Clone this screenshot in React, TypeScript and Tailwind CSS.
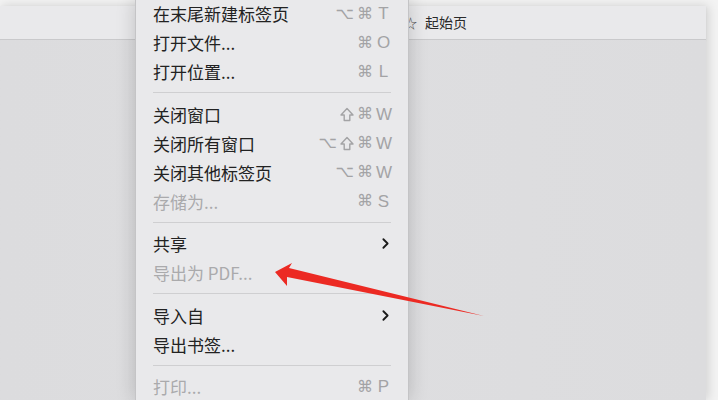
import { ChevronRight } from "lucide-react";

type Item =
  | { kind: "item"; label: string; keys?: string; disabled?: boolean; submenu?: boolean }
  | { kind: "sep" };

const items: Item[] = [
  { kind: "item", label: "在末尾新建标签页", keys: "⌥⌘T" },
  { kind: "item", label: "打开文件...", keys: "⌘O" },
  { kind: "item", label: "打开位置...", keys: "⌘L" },
  { kind: "sep" },
  { kind: "item", label: "关闭窗口", keys: "⇧⌘W" },
  { kind: "item", label: "关闭所有窗口", keys: "⌥⇧⌘W" },
  { kind: "item", label: "关闭其他标签页", keys: "⌥⌘W" },
  { kind: "item", label: "存储为...", keys: "⌘S", disabled: true },
  { kind: "sep" },
  { kind: "item", label: "共享", submenu: true },
  { kind: "item", label: "导出为 PDF...", disabled: true },
  { kind: "sep" },
  { kind: "item", label: "导入自", submenu: true },
  { kind: "item", label: "导出书签..." },
  { kind: "sep" },
  { kind: "item", label: "打印...", keys: "⌘P", disabled: true },
];

// outline shift arrow, the font version comes out too small
function ShiftKey() {
  return (
    <svg width="14" height="15" viewBox="0 0 14 15" fill="none" stroke="currentColor" strokeWidth="1.4" strokeLinejoin="round">
      <path d="M7 1.5 L13 8 H9.8 V13.5 H4.2 V8 H1 Z" />
    </svg>
  );
}

function Shortcut({ keys }: { keys: string }) {
  const chars = Array.from(keys);
  return (
    <span className="flex items-center gap-[3px] text-[#a3a3a5]">
      {chars.map((c, i) =>
        c === "⇧" ? (
          <ShiftKey key={i} />
        ) : (
          <span
            key={i}
            className={
              /[A-Z]/.test(c)
                ? "w-[15px] text-center font-['Liberation_Sans',sans-serif] text-[17px]"
                : "font-['DejaVu_Sans',sans-serif] text-[16px]"
            }
          >
            {c}
          </span>
        )
      )}
    </span>
  );
}

function FileMenu() {
  return (
    <div className="absolute left-[135px] top-[-1px] w-[274px] h-[402px] bg-[#e9e9eb] border-x border-[#c4c4c6] shadow-[0_0_18px_rgba(0,0,0,0.18)]">
      {items.map((it, i) =>
        it.kind === "sep" ? (
          <div key={i} className="h-[13.5px] flex items-center px-[17px]">
            <div className="h-px w-full bg-[#cfcfd1]" />
          </div>
        ) : (
          <div
            key={i}
            className={
              "h-[29px] flex items-center justify-between px-[17px] text-[17px] leading-none " +
              (it.disabled ? "text-[#aaaaac]" : "text-[#222222]")
            }
          >
            <span>{it.label}</span>
            {it.keys && <Shortcut keys={it.keys} />}
            {it.submenu && <ChevronRight className="w-[17px] h-[17px] text-[#1a1a1a] mr-[-3px]" strokeWidth={2.6} />}
          </div>
        )
      )}
    </div>
  );
}

function Arrow() {
  return (
    <svg className="absolute left-0 top-0 pointer-events-none" width="718" height="400" viewBox="0 0 718 400">
      <polygon points="275,272 292,263 289,268 484,316 287,277 287,286" fill="#ec2a23" />
    </svg>
  );
}

export default function App() {
  return (
    <div
      className="relative w-[718px] h-[400px] overflow-hidden bg-[#f3f3f3]"
      style={{ fontFamily: '"Noto Sans CJK SC", "Noto Sans", sans-serif' }}
    >
      <div className="pt-[6px] pr-[12px] h-full">
        <div className="h-full flex flex-col bg-[#dcdcde] shadow-[2px_0_10px_rgba(0,0,0,0.15)]">
          <div className="h-[34px] shrink-0 flex items-center bg-[#e9e9eb] border-b border-[#c9c9cb] shadow-[0_1px_2px_rgba(0,0,0,0.06)]">
            <div className="w-[404px]" />
            <span className="text-[13px] text-[#555] mr-[8px]">☆</span>
            <span className="text-[14px] text-[#2a2a2a]">起始页</span>
          </div>
          <div className="flex-1 bg-gradient-to-r from-[#dcdcde] via-[#dedee0] to-[#dcdcde]" />
        </div>
      </div>
      <FileMenu />
      <Arrow />
    </div>
  );
}
